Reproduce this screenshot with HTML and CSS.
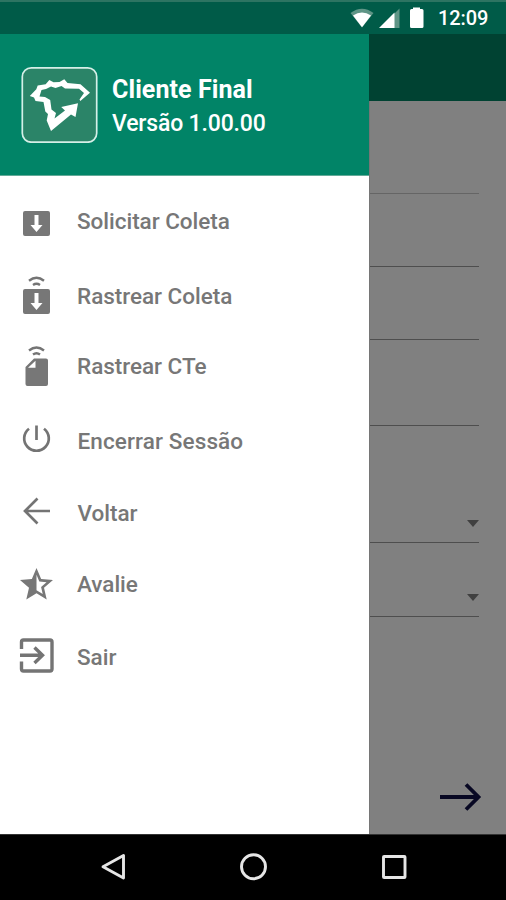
FILE: index.html
```html
<!DOCTYPE html>
<html lang="pt-BR">
<head>
<meta charset="utf-8">
<title>Cliente Final</title>
<link rel="stylesheet" href="styles.css">
</head>
<body>
<div class="phone">
  <header class="status">
    <svg class="status-icons" viewBox="348 2 80 32" width="80" height="32">
      <path fill="#5f9586" d="M350.500 13Q362 4.500 373.500 13L362 27.500Z"/>
      <path fill="#fff" d="M353 15.500Q362 9.500 371 15.500L362 27.300Z"/>
      <path fill="#5f9586" d="M399.500 8.500V28H394V14Z"/>
      <path fill="#fff" d="M379 28L394.500 12.500V28Z"/>
      <path fill="#fff" d="M413 7.500h7v1.500h2q1.500 0 1.500 1.500v16q0 1.500-1.500 1.500h-10.500q-1.500 0-1.500-1.500v-16q0-1.500 1.500-1.500h1.500z"/>
    </svg>
    <time class="clock">12:09</time>
  </header>
  <main class="content">
    <aside class="drawer">
      <div class="profile">
        <svg class="logo" viewBox="21 66 77 77" width="77" height="77">
          <rect x="22.300" y="67.800" width="74.400" height="74.400" rx="9" fill="#2b8468" stroke="#d5efe7" stroke-width="1.700"/>
          <path fill="#fff" d="M29.800 96L36.300 89.300L37.700 85.500L45.700 84.200L49.300 80L53.500 82.300L59.500 82L64.300 79.200L67.500 83L80.500 84.200L90 92.700L80.300 101L79.500 99.500L84 93L79 88.700L65 88.500L61.500 86L55.500 88L51 86.500L46 89L41.500 90L39.500 96.500L45 97L50.200 100L51.500 109.500L56 113L54.500 118.500L65 110.500L61.200 107L78 103.300L75.500 117L71 114.500L51 131L46.700 120.500L48 114L45.300 111.500L43.500 102L35.500 101L34 97.500Z"/>
        </svg>
        <div class="identity">
          <h1 class="name">Cliente Final</h1>
          <p class="version">Versão 1.00.00</p>
        </div>
      </div>
      <nav class="menu">
        <a class="item request">
          <svg class="icon" viewBox="18 201 38 40"><path fill-rule="evenodd" d="M25 211h23q2 0 2 2v21q0 2-2 2H25q-2 0-2-2V213q0-2 2-2zm9.500 4v10h-4l6 7 6-7h-4v-10z"/></svg>
          <span class="label">Solicitar Coleta</span>
        </a>
        <a class="item track">
          <svg class="icon" viewBox="18 276 38 40"><path fill-rule="evenodd" d="M25 289h23q2 0 2 2v21q0 2-2 2H25q-2 0-2-2V291q0-2 2-2zm9.500 4v10h-4l6 7 6-7h-4v-10z"/><path class="line thin" d="M29 280.800Q36.500 274.800 44 280.800M33 285Q36.500 282.600 40 285"/></svg>
          <span class="label">Rastrear Coleta</span>
        </a>
        <a class="item document">
          <svg class="icon" viewBox="18 346 38 40"><path fill-rule="evenodd" d="M34 358.500h12q2 0 2 2V384q0 2-2 2H27.500q-2 0-2-2V367zm1.500 2.300l-7.500 7h7.500z"/><path class="line thin" d="M29 350.500Q36.500 344.500 44 350.500M33 354.500Q36.500 352 40 354.500"/></svg>
          <span class="label">Rastrear CTe</span>
        </a>
        <a class="item session">
          <svg class="icon" viewBox="18 421 38 40"><path class="line" d="M36.500 425.500v14.500M29 428.700A12.300 12.300 0 1 0 44 428.700"/></svg>
          <span class="label">Encerrar Sessão</span>
        </a>
        <a class="item back">
          <svg class="icon" viewBox="18 493 38 40"><path class="line" d="M50 511H25M37.500 498.500L25 511L37.500 523.500"/></svg>
          <span class="label">Voltar</span>
        </a>
        <a class="item rate">
          <svg class="icon" viewBox="18 564 38 40"><path transform="translate(16.700 564.800) scale(1.650)" d="M22 9.240l-7.190-.62L12 2 9.190 8.630 2 9.240l5.460 4.730L5.820 21 12 17.270 18.180 21l-1.630-7.030L22 9.240zM12 15.400V6.100l1.710 4.040 4.380.38-3.320 2.880 1 4.280L12 15.400z"/></svg>
          <span class="label">Avalie</span>
        </a>
        <a class="item exit">
          <svg class="icon" viewBox="18 637 38 40"><path class="line heavy" d="M21.500 649V642q0-2 2-2H50q2 0 2 2v27q0 2-2 2H23.500q-2 0-2-2v-7.500M20 655.200H42M34.500 647.500L42.500 655.200L34.500 663"/></svg>
          <span class="label">Sair</span>
        </a>
      </nav>
    </aside>
    <section class="page">
      <div class="toolbar"></div>
      <div class="form">
        <div class="field first"></div>
        <div class="field"></div>
        <div class="field"></div>
        <div class="field tall"></div>
        <div class="field select far"><i class="caret"></i></div>
        <div class="field select"><i class="caret"></i></div>
      </div>
      <svg class="next" viewBox="438 782 44 30" width="44" height="30"><path d="M440 797H478M466 784.500L478.500 797L466 809.500"/></svg>
    </section>
  </main>
  <footer class="navbar">
    <svg viewBox="0 834 506 66" width="506" height="66">
      <path d="M123.500 855.500V878L103 866.800Z"/>
      <circle cx="253.500" cy="866.700" r="12"/>
      <rect x="383.500" y="856.500" width="21.500" height="21" rx=".6"/>
    </svg>
  </footer>
</div>
</body>
</html>
```

FILE: styles.css
```css
* { box-sizing: border-box; }
body { margin: 0; font-family: Roboto, "Liberation Sans", sans-serif; }
.phone { width: 506px; height: 900px; display: flex; flex-direction: column; overflow: hidden; }
.status {
  height: 34px; border-top: 2px solid #2d7462; background: #005b48;
  display: flex; justify-content: flex-end; padding-right: 17px; color: #fff;
}
.status-icons { margin-right: 10px; }
.clock { width: 51px; font-size: 20px; font-weight: 500; line-height: 32px; white-space: nowrap; letter-spacing: -.1px; }
.content { flex: 1; display: flex; }
.drawer { width: 369px; background: #fff; flex: none; }
.profile {
  height: 142px; background: #018467; border-bottom: 1px solid #62aa98;
  display: flex; align-items: flex-start; padding: 32px 0 0 21px; color: #fff;
}
.identity { margin: 8px 0 0 14px; }
.name { margin: 0; font-size: 25px; line-height: 32px; font-weight: 700; white-space: nowrap; letter-spacing: .08px; }
.version { margin: 0; font-size: 23px; line-height: 36px; font-weight: 500; white-space: nowrap; letter-spacing: -.17px; }
.menu { padding: 25px 0 0 18px; color: #777; }
.item { display: flex; height: 40px; align-items: center; }
.icon { width: 38px; height: 40px; margin-right: 21px; fill: #777; }
.line { fill: none; stroke: #747474; stroke-width: 2.700; }
.thin { stroke-width: 2.400; }
.heavy { stroke-width: 3.400; }
.label { font-size: 22.500px; line-height: 40px; font-weight: 500; white-space: nowrap; letter-spacing: -.03px; }
.track { margin-top: 35px; }
.document { margin-top: 30px; }
.session { margin-top: 35px; }
.session .label { letter-spacing: .12px; }
.back { margin-top: 32px; }
.back .label, .session .label { margin-left: .5px; }
.rate { margin-top: 31px; }
.exit { margin-top: 33px; }
.page { flex: 1; background: #808080; border-left: 1px solid #767676; display: flex; flex-direction: column; }
.toolbar { height: 67px; background: #004232; margin-left: -1px; }
.form { margin-right: 27px; }
.field { height: 73px; border-bottom: 1.500px solid #4e4e4e; display: flex; justify-content: flex-end; align-items: flex-end; }
.first { height: 93px; border-color: #656565; }
.tall { height: 86px; }
.far { height: 117px; }
.select:last-child { height: 74px; }
.caret { border: 6px solid transparent; border-top: 7px solid #404040; border-bottom: 0; margin-bottom: 15px; }
.next { margin: auto 24px 22px auto; fill: none; stroke: #080823; stroke-width: 3.800; }
.navbar { height: 66px; background: #000; border-top: 1px solid #343434; }
.navbar svg { display: block; margin-top: -1px; fill: none; stroke: #e6e6e6; stroke-width: 2.900; stroke-linejoin: round; }
```
